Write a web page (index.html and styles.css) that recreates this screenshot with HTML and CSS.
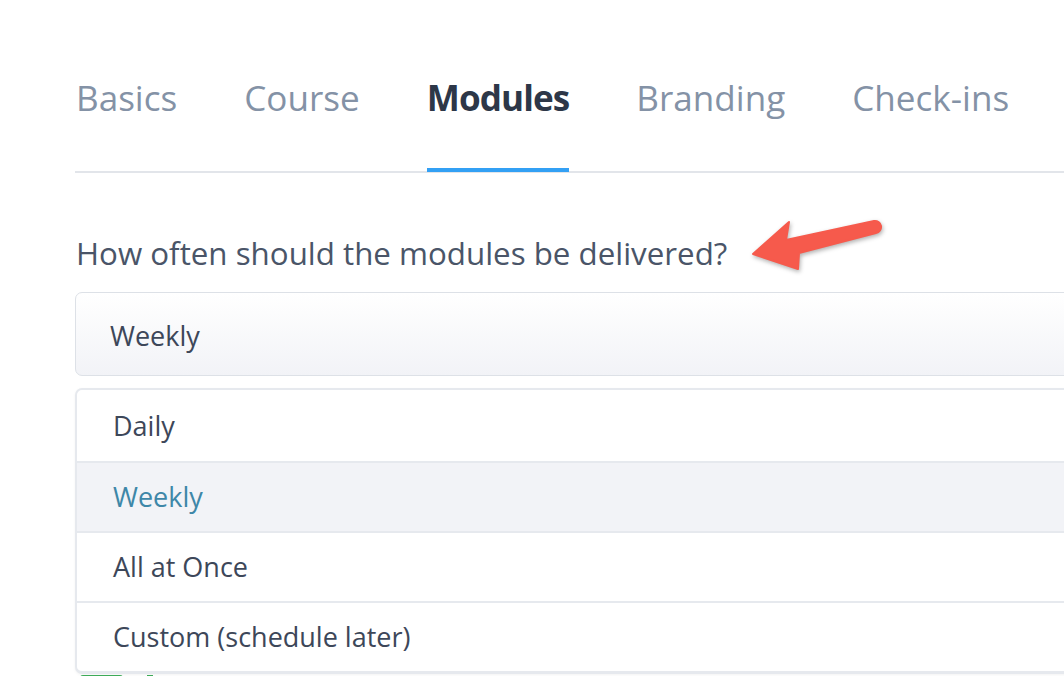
FILE: index.html
```html
<!DOCTYPE html>
<html>
<head>
<meta charset="utf-8">
<link rel="stylesheet" href="styles.css">
</head>
<body>
<div class="page">
  <nav class="tabs">
    <div class="tab">Basics</div>
    <div class="tab">Course</div>
    <div class="tab active">Modules</div>
    <div class="tab">Branding</div>
    <div class="tab">Check-ins</div>
  </nav>

  <div class="field">
    <label class="question">How often should the modules be delivered?</label>
    <div class="select">Weekly</div>
    <ul class="menu">
      <li class="option first">Daily</li>
      <li class="option selected">Weekly</li>
      <li class="option">All at Once</li>
      <li class="option">Custom (schedule later)</li>
    </ul>
  </div>

  <div class="below">
    <span class="toggle"></span>
    <span class="knob"></span>
  </div>

  <svg class="arrow" width="150" height="70" viewBox="745 212 150 70">
    <path d="M753,254 L789,222 L786,240 L874,221 A6,6 0 0 1 876,233 L799,253 L798,269 Z" fill="#f65a4c" stroke="#f65a4c" stroke-width="2" stroke-linejoin="round"/>
  </svg>
</div>
</body>
</html>
```

FILE: styles.css
```css
html, body {
  margin: 0;
  padding: 0;
  background: #ffffff;
  overflow: hidden;
}

.page {
  position: relative;
  width: 1140px;
  height: 676px;
  padding-left: 75px;
  font-family: "Open Sans", "Noto Sans", sans-serif;
  overflow: hidden;
}

.tabs {
  display: flex;
  gap: 67px;
  padding-top: 76px;
  padding-left: 1px;
  border-bottom: 2px solid #e2e5ea;
}

.tab {
  font-size: 35.1px;
  line-height: 42px;
  color: #8492a6;
  padding-bottom: 50px;
  border-bottom: 4px solid transparent;
  margin-bottom: -1px;
}

.tab.active {
  color: #2d3748;
  font-weight: 700;
  letter-spacing: -0.9px;
  border-bottom-color: #33a0f4;
}

.field {
  margin-top: 61px;
}

.question {
  display: block;
  font-size: 31.3px;
  line-height: 38px;
  color: #4a5568;
  padding-left: 1px;
  margin-bottom: 20px;
}

.select {
  font-size: 27px;
  line-height: 34px;
  color: #3d4759;
  padding: 26px 34px 22px;
  border: 1px solid #dde1e7;
  border-radius: 7px;
  background: linear-gradient(#ffffff, #f2f3f7);
}

.menu {
  list-style: none;
  margin: 12px 0 0;
  padding: 0;
  border: 2px solid #e6e9ee;
  border-bottom-width: 3px;
  border-radius: 7px;
  background: #ffffff;
  box-shadow: 0 1px 3px rgba(0, 0, 0, 0.05);
  overflow: hidden;
}

.option {
  font-size: 27px;
  line-height: 34px;
  color: #3d4759;
  padding: 17px 36px 17px;
  border-top: 2px solid #e6e9ee;
}

.option.first {
  border-top: none;
  padding-top: 19px;
  padding-bottom: 18px;
}

.option.selected {
  background: #f2f3f7;
  color: #3e87a8;
}

.below {
  display: flex;
  align-items: flex-start;
  gap: 24px;
  margin-top: 1px;
  padding-left: 5px;
}

.toggle {
  display: block;
  width: 43px;
  height: 24px;
  border-radius: 3px;
  background: #3daa58;
}

.knob {
  display: block;
  width: 6px;
  height: 24px;
  background: #3daa58;
}

.arrow {
  position: absolute;
  left: 745px;
  top: 212px;
  filter: drop-shadow(1px 2px 2px rgba(0, 0, 0, 0.3));
}
```
